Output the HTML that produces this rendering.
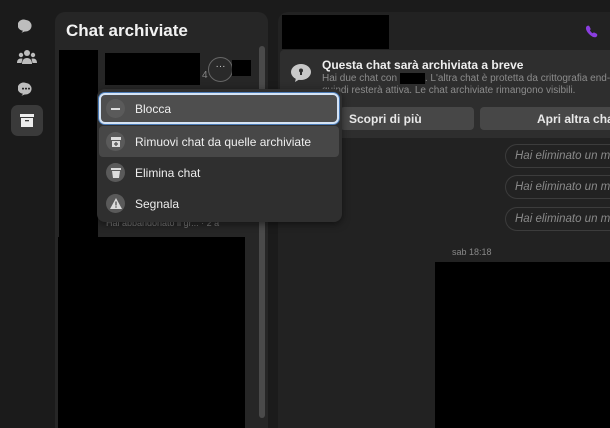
<!DOCTYPE html>
<html><head><style>
*{margin:0;padding:0;box-sizing:border-box}
html,body{width:610px;height:428px;overflow:hidden}
body{background:#1b1b1b;font-family:"Liberation Sans",sans-serif;position:relative;color:#e8e8e8}
.a{position:absolute}
.blk{position:absolute;background:#000}
.mi{position:absolute;left:2px;width:240px;height:31px;display:flex;align-items:center;font-size:12px;color:#eee}
.ic{width:19px;height:19px;border-radius:50%;background:#5a5a5a;margin-left:7px;margin-right:10px;display:flex;align-items:center;justify-content:center}
.bub{position:absolute;left:505px;width:105px;height:24px;border:1px solid #3c3c3c;border-right:none;border-radius:12px 0 0 12px;font-style:italic;font-size:11.5px;color:#8a8a8a;padding:5px 0 0 9px;white-space:nowrap;overflow:hidden}
</style></head><body>
<svg class="a" style="left:18px;top:18px" width="16" height="16" viewBox="0 0 16 16"><path d="M8 2a6 5.6 0 1 0 -3 10.7l-1.5 2 3.2-1.2A6 5.6 0 1 0 8 2z" fill="#bdbdbd"/></svg>
<svg class="a" style="left:17px;top:49px" width="20" height="16" viewBox="0 0 20 16"><circle cx="10" cy="4" r="3" fill="#bdbdbd"/><circle cx="4" cy="6" r="2.2" fill="#bdbdbd"/><circle cx="16" cy="6" r="2.2" fill="#bdbdbd"/><path d="M5 15c0-4 2-6 5-6s5 2 5 6z" fill="#bdbdbd"/><path d="M0 14c0-3 1.5-4.5 4-4.5 1 0 1.5.3 1.5.3L4.5 14zM20 14c0-3-1.5-4.5-4-4.5-1 0-1.5.3-1.5.3l1 4.2z" fill="#bdbdbd"/></svg>
<svg class="a" style="left:18px;top:81px" width="16" height="16" viewBox="0 0 16 16"><path d="M8 2a6 5.6 0 1 0 -3 10.7l-1.5 2 3.2-1.2A6 5.6 0 1 0 8 2z" fill="#bdbdbd"/><circle cx="5" cy="7.6" r="1" fill="#1b1b1b"/><circle cx="8" cy="7.6" r="1" fill="#1b1b1b"/><circle cx="11" cy="7.6" r="1" fill="#1b1b1b"/></svg>
<div class="a" style="left:11px;top:105px;width:32px;height:31px;border-radius:7px;background:#3a3a3a"></div>
<svg class="a" style="left:19px;top:113px" width="16" height="15" viewBox="0 0 16 15"><rect x="1" y="1" width="14" height="3" fill="#eee"/><rect x="2" y="5" width="12" height="9" fill="#eee"/><rect x="6" y="7" width="4" height="1.3" fill="#3a3a3a"/></svg>
<div class="a" style="left:55px;top:12px;width:213px;height:416px;background:#262626;border-radius:10px 10px 0 0"></div>
<div class="a" style="left:66px;top:21px;font-size:17px;font-weight:bold;color:#f2f2f2">Chat archiviate</div>
<div class="a" style="left:259px;top:46px;width:6px;height:372px;border-radius:3px;background:#4a4a4a"></div>
<div class="blk" style="left:59px;top:50px;width:39px;height:190px"></div>
<div class="blk" style="left:58px;top:237px;width:187px;height:191px"></div>
<div class="blk" style="left:105px;top:53px;width:95px;height:32px"></div>
<div class="a" style="left:202px;top:70px;font-size:10px;color:#888">4</div>
<div class="a" style="left:208px;top:57px;width:25px;height:25px;border-radius:50%;border:1px solid #666;background:#2a2a2a;text-align:center;font-size:10px;line-height:18px;color:#ccc">···</div>
<div class="blk" style="left:232px;top:60px;width:19px;height:16px"></div>
<div class="a" style="left:106px;top:218px;font-size:9px;color:#777">Hai abbandonato il gr... · 2 a</div>
<div class="a" style="left:278px;top:12px;width:332px;height:416px;background:#222;border-radius:10px 0 0 0"></div>
<div class="blk" style="left:282px;top:15px;width:107px;height:34px"></div>
<svg class="a" style="left:585px;top:25px" width="13" height="13" viewBox="0 0 13 13"><path d="M2 1c1-.6 2-.4 2.5.5l1 2c.3.7 0 1.3-.6 1.7 .6 1.3 1.6 2.4 2.9 3 .4-.6 1-.9 1.7-.6l2 1c.9.5 1 1.5.5 2.5C11 12.5 9 12.8 6.5 11 3.5 9 1.5 6.3 1 4 .8 2.6 1.2 1.5 2 1z" fill="#8a3ee0"/></svg>
<div class="a" style="left:280px;top:50px;width:330px;height:88px;background:#2e2e2e;border-radius:4px 0 0 4px"></div>
<svg class="a" style="left:290px;top:63px" width="22" height="20" viewBox="0 0 22 20"><ellipse cx="11" cy="9" rx="10" ry="8" fill="#c8c8c8"/><path d="M6 15l-1 4 5-3z" fill="#c8c8c8"/><circle cx="11" cy="7.5" r="2" fill="#2e2e2e"/><rect x="10" y="8" width="2" height="4" fill="#2e2e2e"/></svg>
<div class="a" style="left:322px;top:58px;font-size:12px;font-weight:bold;color:#eee;white-space:nowrap">Questa chat sarà archiviata a breve</div>
<div class="a" style="left:322px;top:73px;font-size:10px;color:#8c8c8c;line-height:12px;white-space:nowrap">Hai due chat con <span style="background:#000;color:#000">xxxxx</span>. L'altra chat è protetta da crittografia end-to-end,<br>quindi resterà attiva. Le chat archiviate rimangono visibili.</div>
<div class="a" style="left:340px;top:107px;width:134px;height:23px;background:#474747;border-radius:4px;font-size:12px;font-weight:bold;padding:5px 0 0 9px">Scopri di più</div>
<div class="a" style="left:480px;top:107px;width:130px;height:23px;background:#474747;border-radius:4px 0 0 4px;font-size:12px;font-weight:bold;padding:5px 0 0 57px;white-space:nowrap;overflow:hidden">Apri altra chat</div>
<div class="bub" style="top:144px">Hai eliminato un messaggio</div>
<div class="bub" style="top:175px">Hai eliminato un messaggio</div>
<div class="bub" style="top:207px">Hai eliminato un messaggio</div>
<div class="a" style="left:452px;top:247px;font-size:9px;color:#888">sab 18:18</div>
<div class="blk" style="left:435px;top:262px;width:175px;height:166px"></div>
<div class="a" style="left:97px;top:89px;width:245px;height:133px;background:#2f2f2f;border-radius:8px;box-shadow:0 2px 8px rgba(0,0,0,.5)">
 <div class="mi" style="top:4px;background:#4e4e4e;border:2px solid #d6e4f5;border-radius:6px;box-shadow:0 0 0 1px #4a7ab5"><div class="ic" style="margin-left:5px"><div style="width:9px;height:2px;background:#ddd"></div></div>Blocca</div>
 <div class="mi" style="top:37px;background:#474747;border-radius:4px"><div class="ic"><svg width="10" height="10" viewBox="0 0 10 10"><rect x="0" y="0" width="10" height="3" fill="#ddd"/><rect x="1" y="4" width="8" height="6" fill="#ddd"/><rect x="4.3" y="5" width="1.4" height="4" fill="#5a5a5a"/><rect x="3" y="6.3" width="4" height="1.4" fill="#5a5a5a"/></svg></div>Rimuovi chat da quelle archiviate</div>
 <div class="mi" style="top:68px"><div class="ic"><svg width="10" height="11" viewBox="0 0 10 11"><rect x="0" y="1" width="10" height="2" fill="#ddd"/><path d="M1 4h8l-1 7H2z" fill="#ddd"/></svg></div>Elimina chat</div>
 <div class="mi" style="top:99px"><div class="ic"><svg width="12" height="11" viewBox="0 0 12 11"><path d="M6 0l6 11H0z" fill="#ddd"/><rect x="5.3" y="3.5" width="1.4" height="4" fill="#5a5a5a"/><rect x="5.3" y="8.3" width="1.4" height="1.4" fill="#5a5a5a"/></svg></div>Segnala</div>
</div>
</body></html>
